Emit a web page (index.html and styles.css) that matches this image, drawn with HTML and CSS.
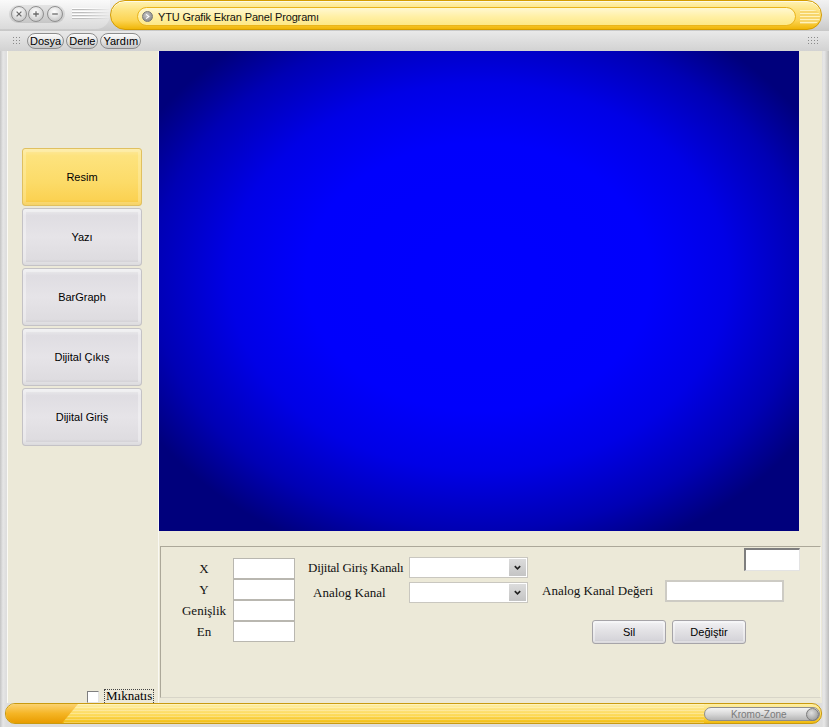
FILE: index.html
```html
<!DOCTYPE html>
<html lang="tr">
<head>
<meta charset="utf-8">
<title>YTU Grafik Ekran Panel Programı</title>
<link rel="stylesheet" href="styles.css">
</head>
<body>
<div class="window">
  <header class="titlebar">
    <div class="caption">
      <div class="ctrls">
        <span class="ctrl"><svg viewBox="0 0 10 10" width="8" height="8"><path d="M2 2L8 8M8 2L2 8" stroke="#6a6a6a" stroke-width="1.6"/></svg></span>
        <span class="ctrl"><svg viewBox="0 0 10 10" width="8" height="8"><path d="M5 1.5V8.5M1.5 5H8.5" stroke="#6a6a6a" stroke-width="1.6"/></svg></span>
        <span class="ctrl"><svg viewBox="0 0 10 10" width="8" height="8"><path d="M1.5 5H8.5" stroke="#6a6a6a" stroke-width="1.6"/></svg></span>
      </div>
      <div class="stripes"></div>
    </div>
    <div class="title-pill">
      <div class="title-inner">
        <span class="title-arrow"><svg viewBox="0 0 10 10" width="7" height="7"><path d="M3 2L7 5L3 8" fill="none" stroke="#fff" stroke-width="1.6"/></svg></span>
        <span class="title-text">YTU Grafik Ekran Panel Programı</span>
      </div>
      <div class="title-grip"></div>
    </div>
  </header>

  <nav class="menubar">
    <span class="grip"></span>
    <span class="menu-btn">Dosya</span>
    <span class="menu-btn">Derle</span>
    <span class="menu-btn">Yardım</span>
    <span class="grip grip-right"></span>
  </nav>

  <div class="client">
    <aside class="toolbox">
      <div class="tools">
        <div class="tool active">Resim</div>
        <div class="tool">Yazı</div>
        <div class="tool">BarGraph</div>
        <div class="tool">Dijital Çıkış</div>
        <div class="tool">Dijital Giriş</div>
      </div>
      <div class="magnet">
        <span class="cb"></span>
        <span class="cb-label">Mıknatıs</span>
      </div>
    </aside>

    <main class="work">
      <div class="canvas-row">
        <div class="canvas"></div>
        <div class="strip"></div>
      </div>
      <section class="props">
        <div class="col1">
          <span class="lbl">X</span><span class="field"></span>
          <span class="lbl">Y</span><span class="field"></span>
          <span class="lbl">Genişlik</span><span class="field"></span>
          <span class="lbl">En</span><span class="field"></span>
        </div>
        <div class="col2">
          <span class="lbl2 l-a">Dijital Giriş Kanalı</span>
          <span class="select"><span class="sel-btn"><svg viewBox="0 0 10 10" width="9" height="9"><path d="M2 3.5L5 6.5L8 3.5" fill="none" stroke="#222" stroke-width="1.8"/></svg></span></span>
          <span class="lbl2 l-b">Analog Kanal</span>
          <span class="select"><span class="sel-btn"><svg viewBox="0 0 10 10" width="9" height="9"><path d="M2 3.5L5 6.5L8 3.5" fill="none" stroke="#222" stroke-width="1.8"/></svg></span></span>
        </div>
        <div class="col3">
          <span class="mini"></span>
          <div class="value-row">
            <span class="lbl3">Analog Kanal Değeri</span>
            <span class="field wide"></span>
          </div>
          <div class="btn-row">
            <span class="btn">Sil</span>
            <span class="btn">Değiştir</span>
          </div>
        </div>
      </section>
    </main>
  </div>

  <footer class="statusbar">
    <div class="status-left"></div>
    <div class="status-fill"></div>
    <div class="kromo"><span class="kromo-text">Kromo-Zone</span><span class="knob"></span></div>
  </footer>
</div>
</body>
</html>
```

FILE: styles.css
```css
* { box-sizing: border-box; }
html, body { margin: 0; padding: 0; }
body {
  width: 829px;
  height: 727px;
  overflow: hidden;
  background: #d9d9d9;
  font-family: "Liberation Sans", Arial, sans-serif;
  font-size: 11px;
  color: #000;
}
.window {
  width: 829px;
  height: 727px;
  display: flex;
  flex-direction: column;
  background: linear-gradient(90deg, #c4c4c4 0, #e6e6e6 3px, #dedede 6px, #dedede 822px, #e8e8e8 824px, #bdbdbd 829px);
}

/* ---------- title bar ---------- */
.titlebar {
  height: 31px;
  display: flex;
  align-items: flex-start;
  background: linear-gradient(#f2f2f2, #dcdcdc 60%, #c8c8c8);
}
.caption {
  width: 110px;
  height: 29px;
  display: flex;
  align-items: center;
  padding-left: 9px;
  background: linear-gradient(#fafafa, #dadada);
  border-bottom-right-radius: 14px;
}
.ctrls {
  display: flex;
  gap: 1px;
  margin-top: -2px;
  padding: 1px 2px;
  border-radius: 10px;
  background: linear-gradient(#e4e4e4, #c6c6c6);
}
.ctrl {
  width: 16px;
  height: 16px;
  border-radius: 50%;
  border: 1px solid #8f8f8f;
  background: radial-gradient(circle at 45% 35%, #ffffff 0, #e2e2e2 45%, #b4b4b4 100%);
  display: flex;
  align-items: center;
  justify-content: center;
}
.ctrl:nth-child(3) { margin-left: 2px; }
.stripes {
  width: 40px;
  height: 12px;
  margin-left: 7px;
  margin-top: -2px;
  background: repeating-linear-gradient(#ffffff 0 1px, #bdbdbd 1px 2px, transparent 2px 3px);
  -webkit-mask-image: linear-gradient(90deg, #000 30%, transparent);
  mask-image: linear-gradient(90deg, #000 30%, transparent);
}
.title-pill {
  flex: 1;
  height: 30px;
  margin-right: 7px;
  display: flex;
  align-items: center;
  padding-left: 26px;
  border: 1px solid #d49c00;
  border-radius: 15px;
  background: linear-gradient(#fff3b4 0, #fde27c 35%, #fcd452 70%, #f0b608 100%);
  box-shadow: inset 0 1px 0 #fffbe6;
}
.title-inner {
  width: 659px;
  height: 19px;
  margin-top: 3px;
  display: flex;
  align-items: center;
  padding-left: 4px;
  border: 1px solid #eab51c;
  border-radius: 10px;
  background: linear-gradient(#fff8d2, #fff0a6 50%, #fde886);
}
.title-arrow {
  width: 11px;
  height: 11px;
  border-radius: 50%;
  background: radial-gradient(circle at 40% 35%, #c8c8c8, #7d7d7d);
  border: 1px solid #777;
  display: flex;
  align-items: center;
  justify-content: center;
}
.title-text {
  margin-left: 5px;
  font-size: 11px;
  letter-spacing: -0.15px;
  color: #111;
}
.title-grip {
  width: 20px;
  height: 14px;
  margin-left: 4px;
  margin-top: 3px;
  background: repeating-linear-gradient(#fff3bc 0 1px, #f7d56a 1px 3px);
  border-radius: 0 7px 7px 0;
}

/* ---------- menu bar ---------- */
.menubar {
  height: 20px;
  display: flex;
  align-items: center;
  padding-left: 12px;
  padding-right: 11px;
  gap: 2px;
  background: linear-gradient(#e9e9e9, #d2d2d2);
}
.grip {
  width: 8px;
  height: 10px;
  margin-right: 5px;
  background: radial-gradient(circle, #8a8a8a 0.7px, transparent 1px) 0 0 / 3px 3px;
}
.grip-right { margin-left: auto; margin-right: 0; width: 11px; }
.menu-btn {
  height: 16px;
  padding: 0 2px;
  display: flex;
  align-items: center;
  border: 1px solid #8d8d8d;
  border-radius: 8px;
  background: linear-gradient(#fbfbfb, #dedede 60%, #c6c6c6);
  font-size: 11px;
}

/* ---------- client ---------- */
.client {
  flex: 1;
  min-height: 0;
  margin: 0 7px;
  display: flex;
  background: #ece9d8;
}
.toolbox {
  width: 152px;
  display: flex;
  flex-direction: column;
  overflow: hidden;
  border-right: 1px solid #f9f8f2;
  border-left: 1px solid #fbfaf4;
}
.tools {
  margin-top: 97px;
  margin-left: 14px;
  width: 120px;
  display: flex;
  flex-direction: column;
  gap: 2px;
}
.tool {
  height: 58px;
  display: flex;
  align-items: center;
  justify-content: center;
  border: 1px solid #c4c2c6;
  border-radius: 3px;
  background: linear-gradient(#ececee, #dfdde2 12%, #e6e4e8 50%, #dedce0 90%, #c8c6ca);
  box-shadow: inset 0 0 0 3px rgba(255,255,255,0.35);
  font-size: 11px;
}
.tool.active {
  border-color: #e0c060;
  background: linear-gradient(#fde9a0, #fde37e 12%, #fcdb68 60%, #fbd253 90%, #f3c23a);
  box-shadow: inset 0 0 0 3px rgba(255,250,210,0.3);
}
.magnet {
  margin-top: auto;
  margin-bottom: 0;
  margin-left: 79px;
  display: flex;
  align-items: flex-end;
  gap: 5px;
}
.cb {
  width: 12px;
  height: 12px;
  background: #fff;
  border: 1px solid #7f7f7f;
  border-right-color: #e4e4e4;
  border-bottom-color: #e4e4e4;
}
.cb-label {
  font-family: "Liberation Serif", "Times New Roman", serif;
  font-size: 13px;
  line-height: 12px;
  padding: 0 1px;
  border: 1px dotted #444;
  border-bottom: none;
  height: 14px;
}

.work {
  flex: 1;
  display: flex;
  flex-direction: column;
}
.canvas-row {
  display: flex;
  height: 480px;
}
.canvas {
  width: 640px;
  height: 480px;
  background: radial-gradient(ellipse 60% 62% at 50% 47%, #0000ff 0%, #0000fc 45%, #0000e6 65%, #0000b4 85%, #00007c 100%);
}
.strip { flex: 1; }

.props {
  margin-top: 15px;
  margin-left: 1px;
  width: 661px;
  height: 152px;
  border: 1px solid #aca899;
  border-right-color: #f4f3ee;
  border-bottom-color: #d8d5c8;
  display: flex;
  align-items: flex-start;
}
.col1 {
  margin-left: 14px;
  margin-top: 11px;
  display: grid;
  grid-template-columns: 58px 62px;
  grid-auto-rows: 21px;
}
.lbl, .lbl2, .lbl3 {
  font-family: "Liberation Serif", "Times New Roman", serif;
  font-size: 13px;
  font-weight: 400;
  white-space: nowrap;
  color: #111;
}
.lbl {
  display: flex;
  align-items: center;
  justify-content: center;
}
.field {
  display: block;
  background: #fff;
  border: 1px solid #b9b7b0;
}
.col1 .field { height: 21px; }
.col2 {
  margin-left: 6px;
  margin-top: 10px;
  display: grid;
  grid-template-columns: 108px 119px;
  grid-template-rows: 21px 21px;
  row-gap: 4px;
}
.lbl2 {
  display: flex;
  align-items: center;
}
.l-a { padding-left: 7px; letter-spacing: -0.25px; }
.l-b { padding-left: 12px; }
.select {
  display: flex;
  justify-content: flex-end;
  background: #fff;
  border: 1px solid #c9c7c0;
  padding: 1px;
}
.sel-btn {
  width: 17px;
  display: flex;
  align-items: center;
  justify-content: center;
  background: linear-gradient(#dcdcdc, #c4c4c4);
}
.col3 {
  margin-left: 14px;
  width: 258px;
  display: flex;
  flex-direction: column;
  padding-top: 1px;
}
.mini {
  align-self: flex-end;
  width: 56px;
  height: 23px;
  background: #fff;
  border: 1px solid #fff;
  border-top: 2px solid #7e7e7e;
  border-left: 2px solid #7e7e7e;
  border-right-color: #e3e3e3;
  border-bottom-color: #e3e3e3;
}
.value-row {
  margin-top: 9px;
  display: flex;
  align-items: center;
}
.lbl3 { width: 123px; }
.field.wide {
  width: 119px;
  height: 22px;
  border: 2px solid #cdcbc4;
}
.btn-row {
  margin-top: 18px;
  padding-left: 50px;
  display: flex;
  gap: 6px;
}
.btn {
  width: 74px;
  height: 24px;
  display: flex;
  align-items: center;
  justify-content: center;
  border: 1px solid #a6a4a8;
  border-radius: 3px;
  background: linear-gradient(#f2f2f4, #e4e3e6 40%, #d6d5da 85%, #c2c1c6);
  box-shadow: inset 0 0 0 2px rgba(255,255,255,0.4);
  font-size: 11px;
}

/* ---------- status bar ---------- */
.statusbar {
  height: 21px;
  margin: 0 7px 3px 5px;
  display: flex;
  align-items: stretch;
  border: 1px solid #c99a10;
  border-radius: 10px;
  overflow: hidden;
  background: linear-gradient(#fff0a6 0, #fde27a 30%, #fcd957 60%, #f1bb0e 100%);
}
.status-left {
  width: 72px;
  margin-right: -14px;
  background: linear-gradient(#fbd270, #f5b525 50%, #e89c00);
  clip-path: polygon(0 0, 100% 0, 78% 100%, 0 100%);
}
.status-fill {
  flex: 1;
  background: repeating-linear-gradient(rgba(255,255,255,0.28) 0 1px, transparent 1px 3px);
}
.kromo {
  width: 116px;
  margin: 3px 1px 2px 0;
  display: flex;
  align-items: center;
  justify-content: space-between;
  padding-left: 26px;
  border: 1px solid #8e8e8e;
  border-radius: 8px;
  background: linear-gradient(#f4f4f4, #d8d8d8 50%, #b6b6b6);
}
.kromo-text {
  font-size: 10px;
  color: #7a7a7a;
}
.knob {
  width: 13px;
  height: 13px;
  border-radius: 50%;
  border: 1px solid #7a7a7a;
  background: radial-gradient(circle at 40% 35%, #e0e0e0, #8c8c8c);
}
```
